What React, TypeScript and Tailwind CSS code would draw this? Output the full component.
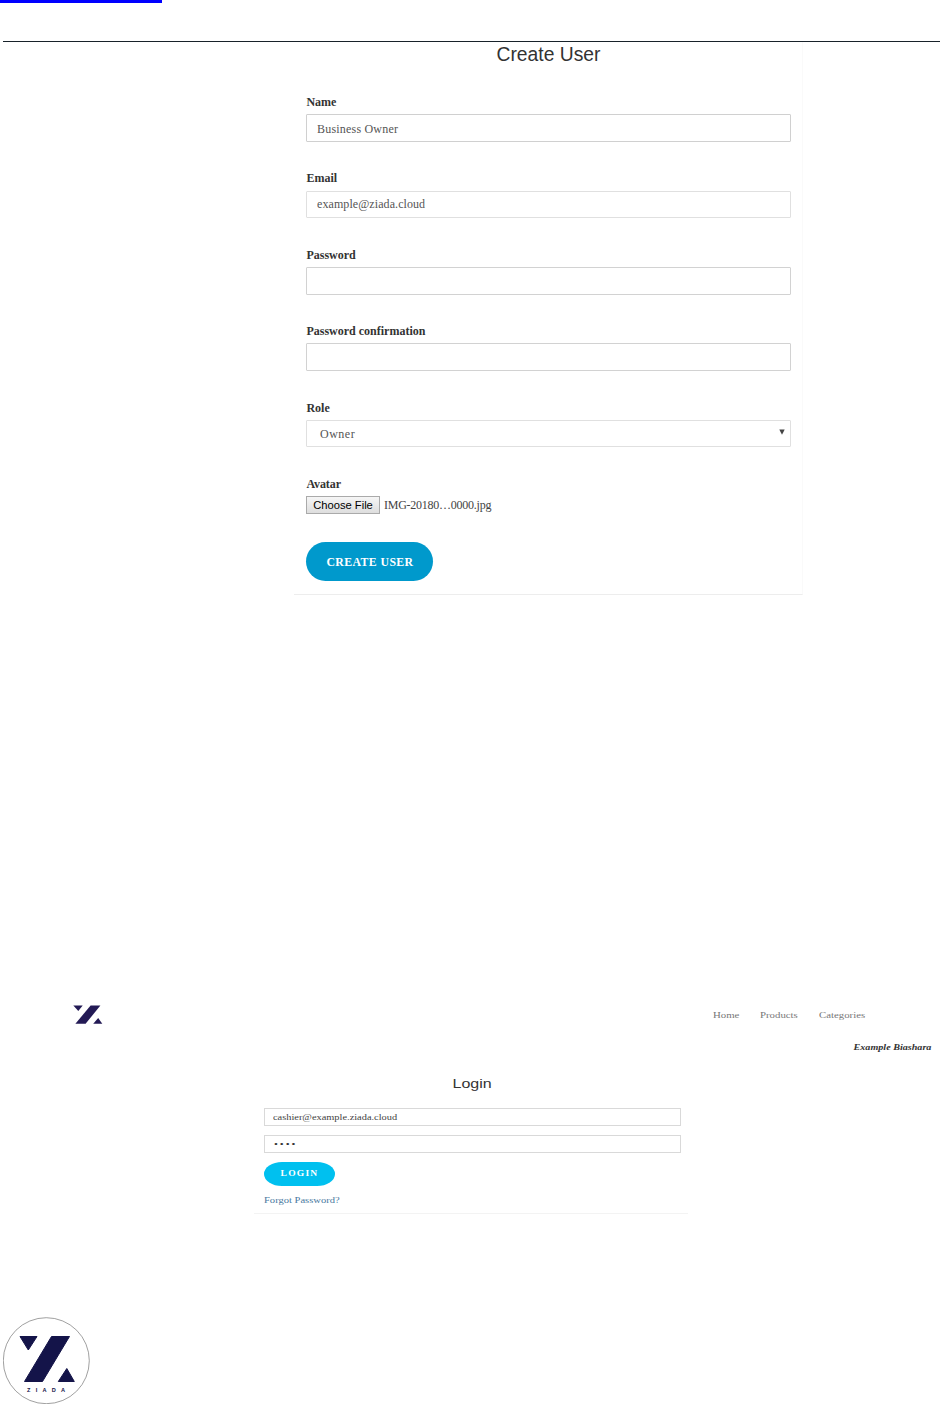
import clsx from "clsx";

interface FieldProps {
  label: string;
  children: React.ReactNode;
}

interface LogoProps {
  className?: string;
}

const inputClass =
  "block w-full rounded-[1px] border bg-white px-[10px] text-[12px] text-[#555] outline-none";

const navLinks = ["Home", "Products", "Categories"];

function Field({ label, children }: FieldProps) {
  return (
    <div className="h-[76.4px]">
      <label className="block h-5 pl-[0.4px] text-[12px] leading-4 font-bold text-[#333]">{label}</label>
      {children}
    </div>
  );
}

function Mark({ className }: LogoProps) {
  return (
    <svg viewBox="0 0 30 19" className={className} fill="#231a55">
      <path d="M0.3 0.6H9.7L5.3 6Z" />
      <path d="M17.6 0.6H27.4L12.6 18.7H2.4Z" />
      <path d="M20.2 18.7H29.3L25.2 13Z" />
    </svg>
  );
}

function RoundLogo({ className }: LogoProps) {
  return (
    <svg viewBox="0 0 88 88" className={className}>
      <circle cx="43.3" cy="43.7" r="43" fill="#fff" stroke="#777" strokeWidth="0.7" />
      <g fill="#141449" stroke="#141449" strokeLinejoin="round">
        <path d="M17 19.5H34L25.3 33Z" />
        <path d="M48.5 19.5H66.5L39.5 64.5H21.5Z" />
        <path d="M55.3 64.5H71.3L63.8 51.5Z" />
      </g>
      <text
        x="24"
        y="74.7"
        textLength="38"
        fontSize="5.6"
        fontWeight="bold"
        fill="#141449"
        fontFamily="'Liberation Sans', sans-serif"
      >
        ZIADA
      </text>
    </svg>
  );
}

function CreateUser() {
  return (
    <section className="ml-[294px] h-[553px] w-[509px] border-r border-b border-r-[#fafafa] border-b-[#ededed] pr-[11px] pl-3">
      <h1 className="h-[52px] pt-[1px] text-center font-['Liberation_Sans',Arial,sans-serif] text-[19.3px] leading-[23px] text-[#333]">
        Create User
      </h1>
      <Field label="Name">
        <input
          className={clsx(inputClass, "h-7 border-[#d0d0d0] pt-[2px] tracking-[0.2px]")}
          defaultValue="Business Owner"
        />
      </Field>
      <Field label="Email">
        <input
          className={clsx(inputClass, "mt-[0.6px] h-[27px] border-[#e0e0e0] pt-px tracking-[0.08px]")}
          defaultValue="example@ziada.cloud"
        />
      </Field>
      <Field label="Password">
        <input type="password" className={clsx(inputClass, "h-7 border-[#d2d2d2]")} />
      </Field>
      <Field label="Password confirmation">
        <input type="password" className={clsx(inputClass, "h-7 border-[#d2d2d2]")} />
      </Field>
      <Field label="Role">
        <div
          className={clsx(
            inputClass,
            "flex h-[27px] items-center justify-between border-[#e0e0e0] pt-px pr-[5px] pl-[13px] tracking-[0.5px]",
          )}
        >
          <span>Owner</span>
          <svg viewBox="0 0 6 6" className="mb-[3px] size-[6px]" fill="#444">
            <path d="M0.3 0.5H5.7L3 5.7Z" />
          </svg>
        </div>
      </Field>
      <div className="h-[66px]">
        <div className="h-5 pl-[0.4px] text-[12px] leading-4 font-bold tracking-[-0.1px] text-[#333]">Avatar</div>
        <div className="flex items-center gap-1">
          <button className="h-[18px] w-[74px] border border-[#aaa] bg-linear-to-b from-[#f6f6f6] to-[#dedede] font-['Liberation_Sans',Arial,sans-serif] text-[11.2px] leading-4 text-black">
            Choose File
          </button>
          <span className="text-[12px] leading-4 tracking-[-0.25px] text-[#444]">IMG-20180…0000.jpg</span>
        </div>
      </div>
      <button className="block h-[39px] w-[127px] rounded-full bg-[#0099cc] pt-[2px] pl-[1px] text-[11.8px] font-bold tracking-[0.4px] text-white">
        CREATE USER
      </button>
    </section>
  );
}

function Login() {
  return (
    <section className="ml-[254px] h-[147px] w-[434px] border-b border-[#f3f3f3] pr-[7px] pl-[10px]">
      <h2 className="h-[41px] pt-[9px] text-center font-['Liberation_Sans',Arial,sans-serif] text-[12.3px] leading-4 text-[#333]">
        <span className="inline-block scale-x-[1.3]">Login</span>
      </h2>
      <div className="h-[18px] border border-[#d9d9d9] pl-2 text-[8.5px] leading-[17px] text-[#444]">
        <span className="inline-block origin-left scale-x-[1.22]">cashier@example.ziada.cloud</span>
      </div>
      <div className="mt-[9px] h-[18px] border border-[#d9d9d9] pl-[9px] text-[8.5px] leading-[17px] text-[#333]">
        <span className="inline-block origin-left scale-x-[1.3] tracking-[1.5px]">••••</span>
      </div>
      <button className="mt-[9px] block h-6 w-[71px] rounded-[18px/12px] bg-[#00c0ef] text-[7.8px] leading-6 font-bold text-white">
        <span className="inline-block scale-x-[1.22] tracking-[1px]">LOGIN</span>
      </button>
      <a className="mt-[8px] block text-[8.5px] leading-3 text-[#4878a0]">
        <span className="inline-block origin-left scale-x-[1.24]">Forgot Password?</span>
      </a>
    </section>
  );
}

export default function App() {
  return (
    <div className="h-[1404px] w-[940px] overflow-hidden bg-white font-['Liberation_Serif','Times_New_Roman',serif]">
      <div className="h-[3px] w-[162px] bg-[#0000ff]" />
      <div className="mt-[38px] ml-[3px] h-px bg-[#18222a]" />
      <CreateUser />

      <header className="mt-[410px] flex h-[19px] justify-between pr-[75px] pl-[73px]">
        <Mark className="h-[19px] w-[30px]" />
        <nav className="flex gap-5 pt-px text-[8.5px] leading-[19px] text-[#777]">
          {navLinks.map((item) => (
            <a
              key={item}
              className={clsx(
                "block",
                item === "Home" && "w-[27px]",
                item === "Products" && "w-[39px]",
                item === "Categories" && "w-[46px]",
              )}
            >
              <span className="inline-block origin-left scale-x-[1.27]">{item}</span>
            </a>
          ))}
        </nav>
      </header>
      <div className="mt-[17px] h-3 pr-[9px] text-right text-[8.5px] leading-3 font-bold text-[#333] italic">
        <span className="inline-block origin-right scale-x-[1.19]">Example Biashara</span>
      </div>
      <div className="h-[14px]" />
      <Login />

      <footer className="mt-[103px] pl-[3px]">
        <RoundLogo className="block size-[88px]" />
      </footer>
    </div>
  );
}
